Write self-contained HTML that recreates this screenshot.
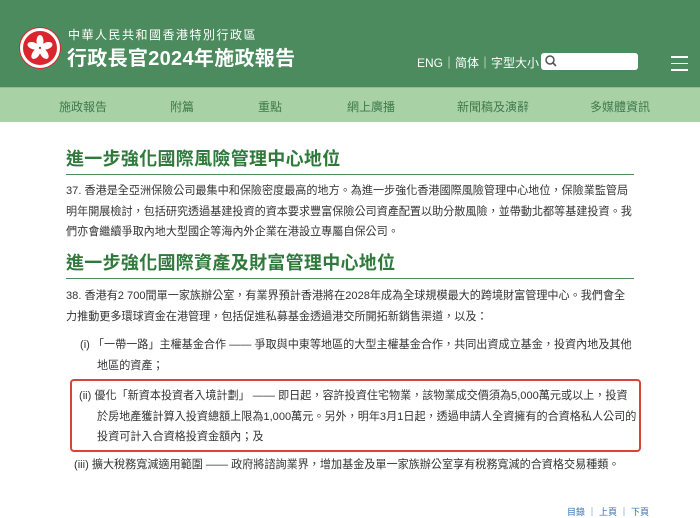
<!DOCTYPE html>
<html><head><meta charset="utf-8"><style>
*{margin:0;padding:0;box-sizing:border-box}
body{width:700px;height:518px;overflow:hidden;background:#fff;font-family:"Liberation Sans","Noto Sans CJK TC",sans-serif;color:#333;position:relative}
.hdr{position:absolute;left:0;top:0;width:700px;height:87px;background:#4b8b5d}
.nav{position:absolute;left:0;top:87px;width:700px;height:35px;background:#a9d1a6;border-top:1px solid #8fbf8c}
.nav span{position:absolute;top:10px;font-size:12px;color:#3f7a4a}
.t1{position:absolute;left:68px;top:26px;color:#fff;font-size:12px;letter-spacing:1.5px}
.t2{position:absolute;left:67px;top:42px;color:#fff;font-size:20px;font-weight:bold;letter-spacing:.3px}
.logo{position:absolute;left:20px;top:28px;width:40px;height:40px;border-radius:50%;background:#d9262e;border:3px solid #fff;box-shadow:0 0 0 1px #d9262e}
.tools{position:absolute;left:417px;top:54px;color:#fff;font-size:12px}
.search{position:absolute;left:541px;top:53px;width:97px;height:17px;background:#fff;border-radius:3px}
.burger{position:absolute;left:671px;top:56px;width:17px}
.burger i{display:block;height:1.5px;background:#fff;margin-bottom:5px}
h2{position:absolute;left:66px;width:568px;font-size:18px;color:#2f7a3b;font-weight:bold;border-bottom:1.5px solid #4f8a5a;padding-bottom:3px;letter-spacing:.3px}
.p{position:absolute;left:66px;font-size:11.1px;line-height:20.5px;white-space:nowrap;color:#333}
.box{position:absolute;left:70px;top:379px;width:571px;height:73px;border:2px solid #d8433a;border-radius:4px}
.foot{position:absolute;top:505px;font-size:9px;color:#2d6fb3;left:567px}
</style></head><body>
<div class="hdr"></div>
<div class="logo"><svg width="34" height="34" viewBox="0 0 34 34"><g fill="#fff" transform="translate(17,17)"><ellipse cx="0" cy="-7" rx="3.5" ry="6"/><ellipse cx="0" cy="-7" rx="3.5" ry="6" transform="rotate(72)"/><ellipse cx="0" cy="-7" rx="3.5" ry="6" transform="rotate(144)"/><ellipse cx="0" cy="-7" rx="3.5" ry="6" transform="rotate(216)"/><ellipse cx="0" cy="-7" rx="3.5" ry="6" transform="rotate(288)"/></g></svg></div>
<div class="t1">中華人民共和國香港特別行政區</div>
<div class="t2">行政長官2024年施政報告</div>
<div class="tools">ENG｜简体｜字型大小</div>
<div class="search"><svg width="14" height="14" viewBox="0 0 14 14" style="position:absolute;left:3px;top:1px"><circle cx="6" cy="6" r="4" fill="none" stroke="#555" stroke-width="1.5"/><path d="M9 9l3 3" stroke="#555" stroke-width="1.6"/></svg></div>
<div class="burger"><i></i><i></i><i></i></div>
<div class="nav"><span style="left:59px">施政報告</span><span style="left:170px">附篇</span><span style="left:258px">重點</span><span style="left:347px">網上廣播</span><span style="left:457px">新聞稿及演辭</span><span style="left:590px">多媒體資訊</span></div>
<h2 style="top:145px">進一步強化國際風險管理中心地位</h2>
<div class="p" style="top:181px">37. 香港是全亞洲保險公司最集中和保險密度最高的地方。為進一步強化香港國際風險管理中心地位，保險業監管局<br>明年開展檢討，包括研究透過基建投資的資本要求豐富保險公司資產配置以助分散風險，並帶動北都等基建投資。我<br>們亦會繼續爭取內地大型國企等海內外企業在港設立專屬自保公司。</div>
<h2 style="top:249px">進一步強化國際資產及財富管理中心地位</h2>
<div class="p" style="top:286px">38. 香港有2 700間單一家族辦公室，有業界預計香港將在2028年成為全球規模最大的跨境財富管理中心。我們會全<br>力推動更多環球資金在港管理，包括促進私募基金透過港交所開拓新銷售渠道，以及：</div>
<div class="p" style="top:335px;left:80px">(i) 「一帶一路」主權基金合作 —— 爭取與中東等地區的大型主權基金合作，共同出資成立基金，投資內地及其他<br><span style="padding-left:17px">地區的資產；</span></div>
<div class="box"></div>
<div class="p" style="top:386px;left:79px">(ii) 優化「新資本投資者入境計劃」 —— 即日起，容許投資住宅物業，該物業成交價須為5,000萬元或以上，投資<br><span style="padding-left:18px">於房地產獲計算入投資總額上限為1,000萬元。另外，明年3月1日起，透過申請人全資擁有的合資格私人公司的</span><br><span style="padding-left:18px">投資可計入合資格投資金額內；及</span></div>
<div class="p" style="top:455px;left:74px">(iii) 擴大稅務寬減適用範圍 —— 政府將諮詢業界，增加基金及單一家族辦公室享有稅務寬減的合資格交易種類。</div>
<div class="foot">目錄 ｜ 上頁 ｜ 下頁</div>
</body></html>
